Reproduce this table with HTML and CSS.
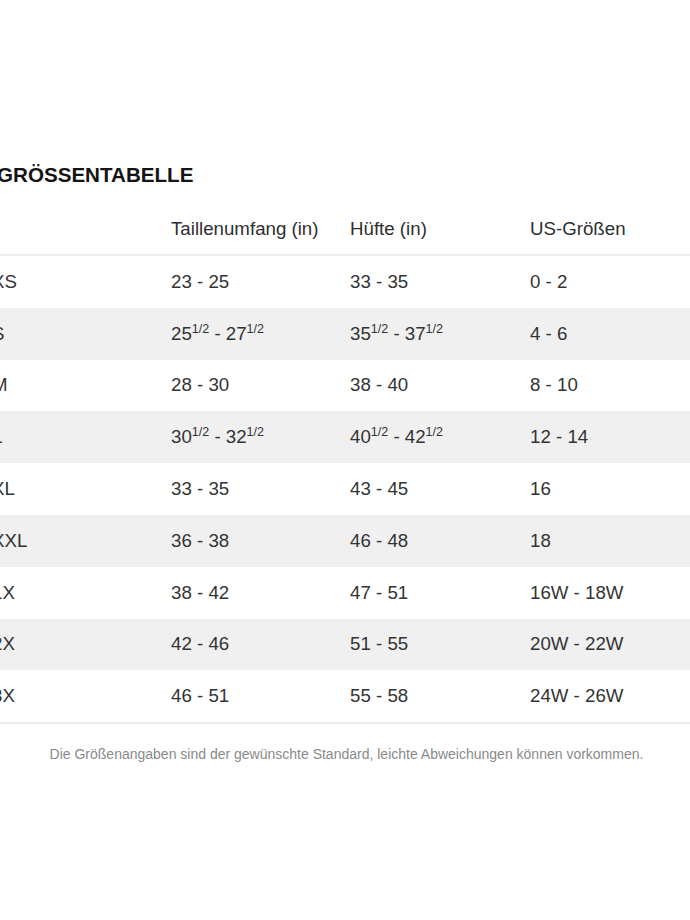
FILE: index.html
```html
<!DOCTYPE html>
<html lang="de">
<head>
<meta charset="utf-8">
<title>Größentabelle</title>
<link rel="stylesheet" href="styles.css">
</head>
<body>
<div class="page">
  <h2 class="title">GRÖSSENTABELLE</h2>
  <table class="sizes">
    <thead>
      <tr><th></th><th>Taillenumfang (in)</th><th>Hüfte (in)</th><th>US-Größen</th></tr>
    </thead>
    <tbody>
      <tr><td>XS</td><td>23 - 25</td><td>33 - 35</td><td>0 - 2</td></tr>
      <tr><td>S</td><td>25<sup>1/2</sup> - 27<sup>1/2</sup></td><td>35<sup>1/2</sup> - 37<sup>1/2</sup></td><td>4 - 6</td></tr>
      <tr><td>M</td><td>28 - 30</td><td>38 - 40</td><td>8 - 10</td></tr>
      <tr><td>L</td><td>30<sup>1/2</sup> - 32<sup>1/2</sup></td><td>40<sup>1/2</sup> - 42<sup>1/2</sup></td><td>12 - 14</td></tr>
      <tr><td>XL</td><td>33 - 35</td><td>43 - 45</td><td>16</td></tr>
      <tr><td>XXL</td><td>36 - 38</td><td>46 - 48</td><td>18</td></tr>
      <tr><td>1X</td><td>38 - 42</td><td>47 - 51</td><td>16W - 18W</td></tr>
      <tr><td>2X</td><td>42 - 46</td><td>51 - 55</td><td>20W - 22W</td></tr>
      <tr><td>3X</td><td>46 - 51</td><td>55 - 58</td><td>24W - 26W</td></tr>
    </tbody>
  </table>
  <p class="note">Die Größenangaben sind der gewünschte Standard, leichte Abweichungen können vorkommen.</p>
</div>
</body>
</html>
```
FILE: styles.css
```css
html, body {
  margin: 0;
  padding: 0;
  background: #ffffff;
}
body {
  font-family: "Liberation Sans", Arial, sans-serif;
  color: #333333;
  overflow: hidden;
}
.page {
  width: 690px;
  padding-top: 163px;
}
.title {
  margin: 0 0 16px -3px;
  font-size: 20.6px;
  line-height: 24px;
  font-weight: bold;
  color: #141414;
}
.sizes {
  margin-left: -8px;
  width: 718px;
  border-collapse: collapse;
  table-layout: fixed;
  font-size: 18.7px;
}
.sizes th,
.sizes td {
  padding: 0;
  text-align: left;
  vertical-align: middle;
  font-weight: normal;
  height: 51.8px;
}
.sizes th:nth-child(1), .sizes td:nth-child(1) { width: 179px; }
.sizes th:nth-child(2), .sizes td:nth-child(2) { width: 179px; }
.sizes th:nth-child(3), .sizes td:nth-child(3) { width: 180px; }
.sizes thead th {
  height: 51px;
  border-bottom: 2px solid #ececec;
  color: #2e2e2e;
}
.sizes tbody tr:nth-child(even) td {
  background: #f0f0f0;
}
.sizes tbody tr:last-child td {
  border-bottom: 2px solid #ececec;
}
.sizes sup {
  font-size: 12.5px;
  line-height: 0;
  vertical-align: 7px;
}
.note {
  margin: 22px 0 0 0;
  padding-left: 3px;
  text-align: center;
  font-size: 14px;
  color: #8a8a8a;
}
```
